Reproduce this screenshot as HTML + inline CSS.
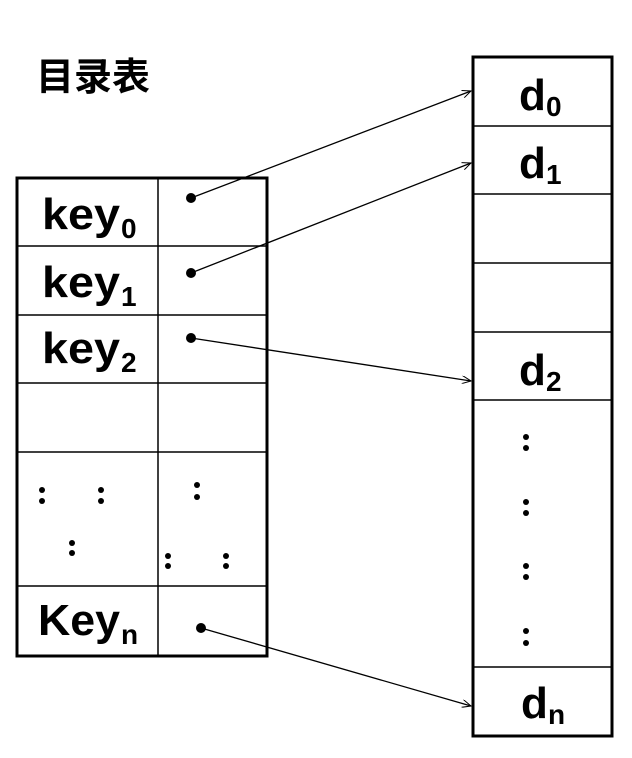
<!DOCTYPE html>
<html><head><meta charset="utf-8"><style>
html,body{margin:0;padding:0;background:#fff;}
svg{display:block}
text{font-family:"Liberation Sans","Noto Sans CJK SC",sans-serif;font-weight:bold;fill:#000}
</style></head><body>
<svg width="632" height="758" viewBox="0 0 632 758" xmlns="http://www.w3.org/2000/svg">
<defs>
<marker id="a" markerWidth="10" markerHeight="8" refX="9" refY="4" orient="auto" markerUnits="userSpaceOnUse">
<path d="M0,0 L9,4 L0,8" fill="none" stroke="#000" stroke-width="1"/>
</marker>
</defs>
<text x="36" y="90" font-size="38">目录表</text>
<g stroke="#000" fill="none">
<rect x="17" y="178" width="250" height="478" stroke-width="3"/>
<line x1="158" y1="178" x2="158" y2="656" stroke-width="1.5"/>
<line x1="17" y1="246" x2="267" y2="246" stroke-width="1.5"/>
<line x1="17" y1="315" x2="267" y2="315" stroke-width="1.5"/>
<line x1="17" y1="383" x2="267" y2="383" stroke-width="1.5"/>
<line x1="17" y1="452" x2="267" y2="452" stroke-width="1.5"/>
<line x1="17" y1="586" x2="267" y2="586" stroke-width="1.5"/>
</g>
<text x="42" y="229" font-size="44" textLength="78" lengthAdjust="spacingAndGlyphs">key</text><text x="121" y="238" font-size="28">0</text>
<text x="42" y="297" font-size="44" textLength="78" lengthAdjust="spacingAndGlyphs">key</text><text x="121" y="306" font-size="28">1</text>
<text x="42" y="363" font-size="44" textLength="78" lengthAdjust="spacingAndGlyphs">key</text><text x="121" y="372" font-size="28">2</text>
<text x="38" y="635" font-size="44" textLength="82" lengthAdjust="spacingAndGlyphs">Key</text><text x="121" y="644" font-size="28">n</text>
<g stroke="#000" fill="none">
<rect x="473" y="57" width="139" height="679" stroke-width="3"/>
<line x1="473" y1="126" x2="612" y2="126" stroke-width="1.5"/>
<line x1="473" y1="194" x2="612" y2="194" stroke-width="1.5"/>
<line x1="473" y1="263" x2="612" y2="263" stroke-width="1.5"/>
<line x1="473" y1="332" x2="612" y2="332" stroke-width="1.5"/>
<line x1="473" y1="400" x2="612" y2="400" stroke-width="1.5"/>
<line x1="473" y1="667" x2="612" y2="667" stroke-width="1.5"/>
</g>
<text x="519" y="110" font-size="44">d</text><text x="546" y="116" font-size="28">0</text>
<text x="519" y="178" font-size="44">d</text><text x="546" y="184" font-size="28">1</text>
<text x="519" y="385" font-size="44">d</text><text x="546" y="391" font-size="28">2</text>
<text x="521" y="718" font-size="44">d</text><text x="548" y="724" font-size="28">n</text>
<g fill="#000">
<circle cx="42" cy="490" r="3"/><circle cx="42" cy="501" r="3"/>
<circle cx="101" cy="490" r="3"/><circle cx="101" cy="501" r="3"/>
<circle cx="72" cy="543" r="3"/><circle cx="72" cy="553" r="3"/>
<circle cx="197" cy="485" r="3"/><circle cx="197" cy="497" r="3"/>
<circle cx="168" cy="556" r="3"/><circle cx="168" cy="566" r="3"/>
<circle cx="226" cy="556" r="3"/><circle cx="226" cy="566" r="3"/>
<circle cx="526" cy="437" r="3"/><circle cx="526" cy="448" r="3"/>
<circle cx="526" cy="502" r="3"/><circle cx="526" cy="513" r="3"/>
<circle cx="526" cy="566" r="3"/><circle cx="526" cy="577" r="3"/>
<circle cx="526" cy="631" r="3"/><circle cx="526" cy="643" r="3"/>
<circle cx="191" cy="198" r="5"/>
<circle cx="191" cy="273" r="5"/>
<circle cx="191" cy="338" r="5"/>
<circle cx="201" cy="628" r="5"/>
</g>
<g stroke="#000" stroke-width="1.3" fill="none">
<line x1="191" y1="198" x2="471" y2="91" marker-end="url(#a)"/>
<line x1="191" y1="273" x2="471" y2="163" marker-end="url(#a)"/>
<line x1="191" y1="338" x2="471" y2="381" marker-end="url(#a)"/>
<line x1="201" y1="628" x2="471" y2="706" marker-end="url(#a)"/>
</g>
</svg>
</body></html>
